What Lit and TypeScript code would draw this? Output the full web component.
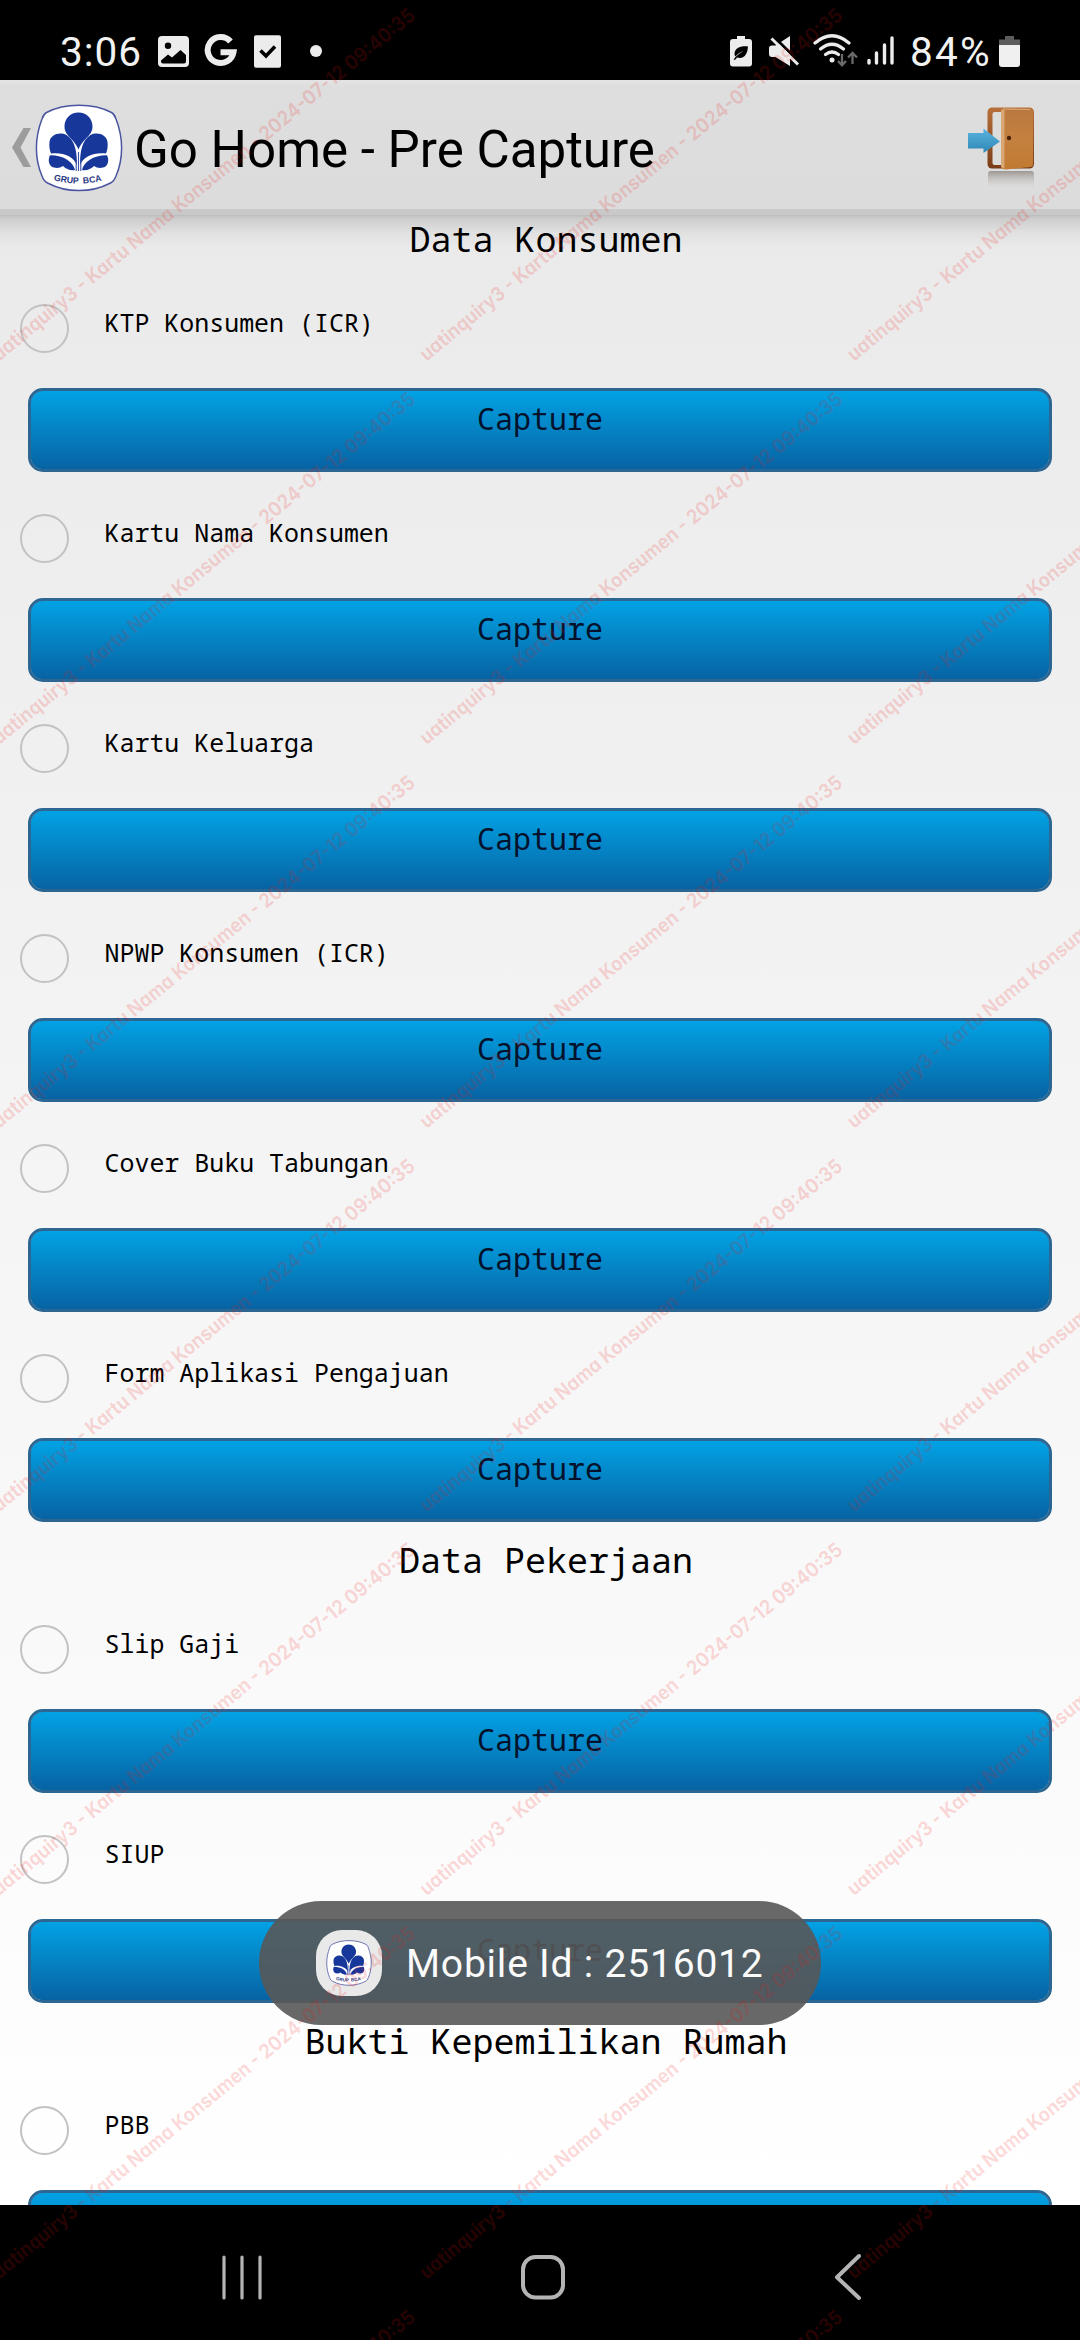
import { LitElement, html, css, svg } from "lit";
import { customElement, property } from "lit/decorators.js";

interface Section {
  title: string;
  items: string[];
}

const SECTIONS: Section[] = [
  {
    title: "Data Konsumen",
    items: [
      "KTP Konsumen (ICR)",
      "Kartu Nama Konsumen",
      "Kartu Keluarga",
      "NPWP Konsumen (ICR)",
      "Cover Buku Tabungan",
      "Form Aplikasi Pengajuan",
    ],
  },
  { title: "Data Pekerjaan", items: ["Slip Gaji", "SIUP"] },
  { title: "Bukti Kepemilikan Rumah", items: ["PBB"] },
];

@customElement("brand-logo")
export class BrandLogo extends LitElement {
  static styles = css`
    :host {
      display: block;
    }
    svg {
      display: block;
      width: 100%;
      height: 100%;
    }
    .name {
      font: 700 8.800px "Liberation Sans", sans-serif;
      word-spacing: 2px;
      fill: #2b3a86;
    }
  `;

  render() {
    const half = svg`
      <path d="M42 61C42 48 40 36 31.500 31C24.500 27.500 15.500 30.500 14.500 38C14 42 14.500 46 16 49.500C28 48 38.500 52.500 42 61Z" />
      <path d="M40 66C38.500 58 28.500 51 15 51.200C13 55 13.500 60 16.500 62.500C20.500 64.800 25 64 28 62C31 65 35.500 67 40 66Z" />
    `;
    return html`<svg viewBox="0 0 88 88">
      <path
        d="M44 1.2C56 1.2 67 3.4 76.5 8.5C79.500 10.200 80 12 81 15C84.500 24 86.600 34 86.600 44C86.600 54 84.500 64 81 72C79.500 76 78.500 77.500 75.500 79C66 84 56 86.600 44 86.600C32 86.600 22 84 12.500 79C9.500 77.500 8.500 76 7 72C3.500 64 1.400 54 1.400 44C1.400 34 3.500 24 7 15C8 12 8.500 10.200 11.500 8.500C21 3.400 32 1.200 44 1.200Z"
        fill="#fff"
        stroke="#4b55a0"
        stroke-width="1.500"
      />
      <g fill="#17379b">
        <path
          d="M43.500 8.500C51.500 8.500 57.500 14.500 57.500 22.500C57.500 32 48.500 33.500 43.500 45.500C38.500 33.500 29.500 32 29.500 22.500C29.500 14.500 35.500 8.500 43.500 8.500Z"
        />
        <g>${half}</g>
        <g transform="translate(87 0) scale(-1 1)">${half}</g>
        <path d="M41.200 56V67M43.500 48V67M45.800 56V67" stroke="#3a50a8" stroke-width="1.100" fill="none" />
      </g>
      <path id="arc" d="M18.500 76.200Q43.500 83 68.500 76.200" fill="none" />
      <text class="name"><textPath href="#arc" textLength="49">GRUP BCA</textPath></text>
    </svg>`;
  }
}

@customElement("status-bar")
export class StatusBar extends LitElement {
  static styles = css`
    :host {
      display: flex;
      justify-content: space-between;
      height: 80px;
      background: #000;
      color: #f2f2f2;
      font: 400 40.500px/44px Roboto, sans-serif;
      box-sizing: border-box;
      padding: 30px 60px 0 60px;
    }
    .side {
      display: flex;
      align-items: flex-start;
    }
    .clock {
      width: 98px;
      letter-spacing: 1px;
    }
    .level {
      width: 89px;
      letter-spacing: 2.200px;
    }
    svg {
      display: block;
      height: 34px;
      margin-top: 4px;
    }
  `;

  render() {
    return html`
      <div class="side">
        <span class="clock">3:06</span>
        <svg width="168" viewBox="158 34 168 34" fill="#ececec">
          <path
            fill-rule="evenodd"
            d="M162 36H185Q189 36 189 40V63Q189 67 185 67H162Q158 67 158 63V40Q158 36 162 36ZM168 42.500A3.200 3.200 0 1 0 168 48.900A3.200 3.200 0 1 0 168 42.500ZM161 60.500V61.500Q161 63.500 163 63.500H184Q186 63.500 186 61.500V55L180.500 50L172 57.500L168 54.500Z"
          />
          <path
            d="M230.500 41.500A13 13 0 1 0 233.500 52.200H220.500"
            fill="none"
            stroke="#ececec"
            stroke-width="6"
          />
          <rect x="254" y="35.200" width="27" height="32.500" rx="2" />
          <path d="M260.500 50.500L266 56L275 46.500" fill="none" stroke="#000" stroke-width="3.600" />
          <circle cx="316" cy="51" r="6" />
        </svg>
      </div>
      <div class="side">
        <svg width="180" viewBox="730 34 180 34" fill="#ececec">
          <path
            d="M737 36H745V39H749Q752 39 752 42V63.500Q752 66.500 749 66.500H733Q730 66.500 730 63.500V42Q730 39 733 39H737Z"
          />
          <path
            d="M748 46.500C741 45.500 735 48 734.500 53.500C734.500 55 735 56 735.500 56.500C737.500 54 740 52 743.500 51C739 53.500 735 56.500 733.500 60L735.500 59.500L737 57.500C744.500 59.500 747.500 54 748 46.500Z"
            fill="#000"
          />
          <path d="M772 45.500H775.500L790 36V66L775.500 57H772Q769 57 769 54V48.500Q769 45.500 772 45.500Z" />
          <path d="M774.500 37.500L801 63.500" stroke="#000" stroke-width="3" />
          <path d="M771.500 38.500L798 64.500" stroke="#ececec" stroke-width="3" />
          <g fill="none" stroke="#ececec" stroke-width="3.200" stroke-linecap="round">
            <path d="M815 43Q832 28.500 849 43" />
            <path d="M820.500 49Q832 39.500 843.500 49" />
            <path d="M825.500 54.500Q832 49.500 838.500 54.500" />
          </g>
          <circle cx="832" cy="60" r="2.500" />
          <path
            d="M842 54V65M838 61L842 65.300L846 61M852.500 64V53.500M848 57.500L852.500 53L857 57.500"
            stroke="#6a6a6a"
            stroke-width="2.300"
            fill="none"
          />
          <g stroke="#ececec" stroke-width="3.400" stroke-linecap="round">
            <path d="M869 60.500V63M876.500 53V63M884.500 45V63M892 38V63" />
          </g>
        </svg>
        <span class="level">84%</span>
        <svg width="21" viewBox="999 34 21 34">
          <path d="M1005 36H1014V39.500H1020V46H999V39.500H1005Z" fill="#5c5c5c" />
          <path d="M999 45H1020V64Q1020 67 1017 67H1002Q999 67 999 64Z" fill="#f0f0f0" />
        </svg>
      </div>
    `;
  }
}

@customElement("action-bar")
export class ActionBar extends LitElement {
  static styles = css`
    :host {
      display: flex;
      align-items: flex-start;
      position: relative;
      z-index: 1;
      height: 135px;
      box-sizing: border-box;
      padding: 24px 42px 0 12px;
      background: linear-gradient(#e4e4e4 0, #dedede 6px, #dcdcdc 129px, #cacaca 129px, #c8c8c8 135px);
    }
    .up {
      display: block;
      width: 19px;
      height: 39px;
      margin: 24px 4px 0 0;
    }
    .logo {
      width: 88px;
      height: 88px;
    }
    h1 {
      flex: 1;
      margin: 16px 0 0 11px;
      font: 400 51.100px/60px Roboto, sans-serif;
      color: #000;
      white-space: nowrap;
    }
    .exit {
      display: block;
      width: 72px;
      height: 86px;
    }
  `;

  render() {
    return html`
      <svg class="up" viewBox="0 0 19 39">
        <path d="M11.500 0H19L8.500 19.500L19 39H11.500L0 19.500Z" fill="#9c9c9c" />
      </svg>
      <brand-logo class="logo"></brand-logo>
      <h1>Go Home - Pre Capture</h1>
      <svg class="exit" viewBox="966 104 72 86">
        <defs>
          <linearGradient id="door" x1="0" y1="0" x2="0" y2="1">
            <stop offset="0" stop-color="#b9783f" />
            <stop offset="0.500" stop-color="#c4803f" />
            <stop offset="1" stop-color="#c07a30" />
          </linearGradient>
          <linearGradient id="frame" x1="0" y1="0" x2="0" y2="1">
            <stop offset="0" stop-color="#b8703a" />
            <stop offset="1" stop-color="#7a3c18" />
          </linearGradient>
          <linearGradient id="shade" x1="0" y1="0" x2="0" y2="1">
            <stop offset="0" stop-color="#8d8580" stop-opacity="0.800" />
            <stop offset="1" stop-color="#c8c4c0" stop-opacity="0" />
          </linearGradient>
          <linearGradient id="arrow" x1="0" y1="0" x2="0" y2="1">
            <stop offset="0" stop-color="#5bb4e0" />
            <stop offset="1" stop-color="#2e86b4" />
          </linearGradient>
        </defs>
        <rect x="988" y="171" width="46" height="17" rx="3" fill="url(#shade)" />
        <rect x="987.500" y="107.500" width="46.500" height="61" rx="4.500" fill="url(#frame)" />
        <rect x="992.500" y="112" width="14" height="53" rx="2" fill="#dcdcda" />
        <path d="M1001 109Q1001 108 1003 108L1030 108.500Q1033 109 1033 112V164Q1033 166.500 1030 167L1006 169.500Q1001 169.500 1001 166Z" fill="url(#door)" />
        <path d="M1001 110V167L1004.500 169V109Z" fill="#d8a774" />
        <path d="M1003 109L1030 109.500" stroke="#dca873" stroke-width="1.200" />
        <circle cx="1009" cy="138" r="2.200" fill="#4a2008" />
        <path d="M968 133H983.500V128.500L1000 141.500L983.500 153V148.500H968Z" fill="url(#arrow)" />
      </svg>
    `;
  }
}

@customElement("capture-item")
export class CaptureItem extends LitElement {
  @property() label = "";

  static styles = css`
    :host {
      display: block;
      height: 210px;
      padding: 0 28px 0 20px;
      box-sizing: border-box;
      color: #000;
    }
    .head {
      display: flex;
      height: 126px;
    }
    .radio {
      width: 49px;
      height: 49px;
      margin-top: 42px;
      box-sizing: border-box;
      border: 2px solid #c2c2c2;
      border-radius: 50%;
    }
    .label {
      margin: 44px 0 0 35.500px;
      font: 400 24.950px/32px "Noto Sans Mono", "Droid Sans Mono", "DejaVu Sans Mono", monospace;
      white-space: pre;
    }
    .capture {
      display: flex;
      justify-content: center;
      align-items: flex-start;
      width: 1024px;
      height: 84px;
      margin: 0 0 0 8px;
      padding: 10px 0 0;
      box-sizing: border-box;
      border: 3px solid #2b6792;
      border-radius: 15px;
      background: linear-gradient(#02a2e4, #0763a3) padding-box;
      background-color: #2b6792;
      color: #04122c;
      font: 400 30px/36px "Noto Sans Mono", "Droid Sans Mono", "DejaVu Sans Mono", monospace;
    }
  `;

  render() {
    return html`
      <div class="head">
        <span class="radio"></span>
        <span class="label">${this.label}</span>
      </div>
      <button class="capture">Capture</button>
    `;
  }
}

@customElement("toast-message")
export class ToastMessage extends LitElement {
  static styles = css`
    :host {
      display: flex;
      align-items: center;
      width: 562px;
      height: 124px;
      box-sizing: border-box;
      padding-left: 57px;
      border-radius: 62px;
      background: rgba(88, 88, 88, 0.9);
    }
    .badge {
      display: flex;
      align-items: center;
      justify-content: center;
      width: 66px;
      height: 66px;
      border-radius: 26px;
      background: #e9e9e9;
    }
    .logo {
      width: 46px;
      height: 46px;
    }
    .text {
      margin: 2px 0 0 24px;
      font: 400 39px/48px Roboto, sans-serif;
      letter-spacing: 0.800px;
      color: #fafafa;
      white-space: nowrap;
    }
  `;

  render() {
    return html`
      <span class="badge"><brand-logo class="logo"></brand-logo></span>
      <span class="text">Mobile Id : 2516012</span>
    `;
  }
}

@customElement("nav-bar")
export class NavBar extends LitElement {
  static styles = css`
    :host {
      display: flex;
      justify-content: space-between;
      height: 135px;
      box-sizing: border-box;
      padding: 48px 218px 0 220px;
      background: #000;
    }
    svg {
      display: block;
      width: 46px;
      height: 50px;
      fill: none;
      stroke: #b4b4b4;
      stroke-linecap: round;
      overflow: visible;
    }
  `;

  render() {
    return html`
      <svg viewBox="220 2253 46 50" stroke-width="3.200">
        <path d="M224 2257V2298M242 2257V2298M260 2257V2298" />
      </svg>
      <svg viewBox="519 2253 46 50" stroke-width="4">
        <rect x="524" y="2257" width="40" height="40.500" rx="12.500" />
      </svg>
      <svg viewBox="816 2253 46 50" stroke-width="4" stroke-linejoin="round">
        <path d="M859 2256L837 2277.200L859 2298" />
      </svg>
    `;
  }
}

@customElement("trace-overlay")
export class TraceOverlay extends LitElement {
  static styles = css`
    :host {
      display: block;
      pointer-events: none;
    }
    svg {
      display: block;
    }
    text {
      font: 700 20px Inter, sans-serif;
      font-feature-settings: "cv11", "ss03";
      fill: rgba(244, 20, 20, 0.16);
    }
  `;

  render() {
    const marks = [];
    for (let row = 0; row < 7; row++) {
      for (let col = 0; col < 3; col++) {
        const x = -1 + col * 427.500;
        const y = 362 + row * 383.600;
        marks.push(svg`<text textLength="541" lengthAdjust="spacingAndGlyphs"
          transform="translate(${x} ${y}) rotate(-39.5)">uatinquiry3 - Kartu Nama Konsumen - 2024-07-12 09:40:35</text>`);
      }
    }
    return html`<svg width="1080" height="2340" viewBox="0 0 1080 2340">${marks}</svg>`;
  }
}

@customElement("app-root")
export class AppRoot extends LitElement {
  static styles = css`
    :host {
      display: flex;
      flex-direction: column;
      position: relative;
      width: 1080px;
      height: 2340px;
      overflow: hidden;
      background: #000;
    }
    main {
      flex: 1;
      min-height: 0;
      overflow: hidden;
      background: linear-gradient(
          rgba(0, 0, 0, 0.2),
          rgba(0, 0, 0, 0.13) 3px,
          rgba(0, 0, 0, 0.04) 18px,
          transparent 34px
        ),
        linear-gradient(#eaeaea, #f4f4f4 45%, #fff);
    }
    .list {
      margin-top: -14px;
    }
    h2 {
      height: 61px;
      margin: 0;
      padding: 17px 0 0 12px;
      box-sizing: border-box;
      font: 400 35px/42px "Noto Sans Mono", "Droid Sans Mono", "DejaVu Sans Mono", monospace;
      color: #000;
      text-align: center;
    }
    .toast {
      position: absolute;
      left: 259px;
      top: 1901px;
    }
    .overlay {
      position: absolute;
      inset: 0;
      z-index: 2;
    }
  `;

  render() {
    return html`
      <status-bar></status-bar>
      <action-bar></action-bar>
      <main>
        <div class="list">
          ${SECTIONS.map(
            (s) => html`
              <h2>${s.title}</h2>
              ${s.items.map((i) => html`<capture-item .label=${i}></capture-item>`)}
            `,
          )}
        </div>
      </main>
      <nav-bar></nav-bar>
      <toast-message class="toast"></toast-message>
      <trace-overlay class="overlay"></trace-overlay>
    `;
  }
}
